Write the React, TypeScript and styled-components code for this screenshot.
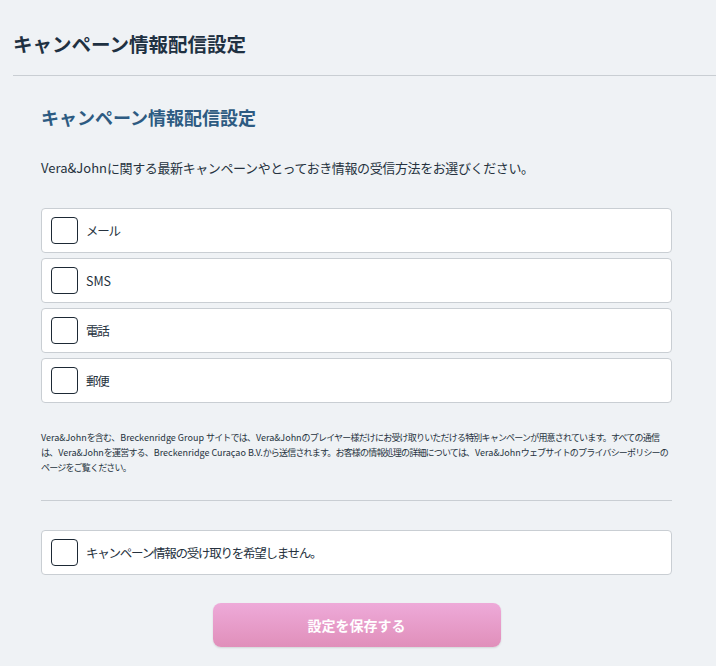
import React, { useState } from 'react';
import styled, { createGlobalStyle } from 'styled-components';

const GlobalStyle = createGlobalStyle`
  html, body {
    margin: 0;
    padding: 0;
    background: #eff2f5;
  }
  body {
    font-family: "Noto Sans CJK JP", "Noto Sans", sans-serif;
    color: #26323e;
  }
`;

const Page = styled.div`
  padding: 28px 0 20px 13px;
`;

const PageTitle = styled.h1`
  margin: 0;
  font-size: 19.5px;
  line-height: 32px;
  font-weight: 700;
  color: #1f3142;
`;

const Divider = styled.hr<{ $inset?: boolean }>`
  border: none;
  border-top: 1px solid #c9ced3;
  margin: ${({ $inset }) => ($inset ? '25px 44px 0 28px' : '15px 0 0 0')};
`;

const Section = styled.section`
  padding: 0 44px 0 28px;
`;

const SectionTitle = styled.h2`
  margin: 26px 0 0 0;
  font-size: 18px;
  line-height: 30px;
  font-weight: 700;
  color: #2d5b82;
`;

// body copy in the original uses a narrower Japanese face; tighten CJK runs only,
// giving the trailing spacing back so the run doesn't run into the next word
const Cjk = styled.span<{ $squeeze: number }>`
  letter-spacing: ${({ $squeeze }) => -$squeeze}em;
  padding-right: ${({ $squeeze }) => $squeeze}em;
`;

const Lead = styled.p`
  margin: 25px 0 0 0;
  font-size: 13px;
  line-height: 22px;
  color: #26323e;
`;

const Options = styled.div`
  display: flex;
  flex-direction: column;
  gap: 5px;
  margin-top: 29px;
`;

const OptionRow = styled.label`
  display: flex;
  align-items: center;
  gap: 8px;
  height: 45px;
  box-sizing: border-box;
  padding: 0 9px;
  background: #fff;
  border: 1px solid #c9ced3;
  border-radius: 4px;
  font-size: 12.5px;
  color: #26323e;
  cursor: pointer;
`;

const Box = styled.span<{ $checked: boolean }>`
  width: 27px;
  height: 27px;
  box-sizing: border-box;
  border: 1.5px solid #1d2935;
  border-radius: 4px;
  background: #fff;
  display: flex;
  align-items: center;
  justify-content: center;
  flex-shrink: 0;
  font-size: 16px;
  color: #1d2935;
`;

const FinePrint = styled.p`
  margin: 27px 0 0 0;
  font-size: 9px;
  line-height: 15px;
  color: #26323e;
`;

const OptOutWrap = styled.div`
  padding: 29px 44px 0 28px;
`;

const Actions = styled.div`
  display: flex;
  justify-content: center;
  padding: 28px 44px 0 28px;
`;

const SaveButton = styled.button`
  width: 288px;
  height: 44px;
  border: none;
  border-radius: 8px;
  background: linear-gradient(#eeaad9, #e08fba);
  box-shadow: 0 1px 2px rgba(0, 0, 0, 0.12);
  color: #fff;
  font-family: inherit;
  font-size: 14px;
  font-weight: 700;
  cursor: pointer;
`;

const CJK_RE = /([\u3000-\u30ff\u4e00-\u9fff\uff00-\uffef]+)/;

const jp = (text: string, squeeze: number) =>
  text.split(CJK_RE).map((part, i) =>
    CJK_RE.test(part) ? (
      <Cjk key={i} $squeeze={squeeze}>
        {part}
      </Cjk>
    ) : (
      part
    )
  );

const channels = ['メール', 'SMS', '電話', '郵便'];

const Option = ({ label }: { label: string }) => {
  const [checked, setChecked] = useState(false);
  return (
    <OptionRow onClick={() => setChecked(!checked)}>
      <Box $checked={checked}>{checked ? '✓' : ''}</Box>
      <span>{jp(label, 0.1)}</span>
    </OptionRow>
  );
};

const finePrint =
  'Vera&Johnを含む、Breckenridge Group サイトでは、Vera&Johnのプレイヤー様だけにお受け取りいただける特別キャンペーンが用意されています。すべての通信は、Vera&Johnを運営する、Breckenridge Curaçao B.V.から送信されます。お客様の情報処理の詳細については、Vera&Johnウェブサイトのプライバシーポリシーのページをご覧ください。';

export default function App() {
  return (
    <>
      <GlobalStyle />
      <Page>
        <PageTitle>キャンペーン情報配信設定</PageTitle>
        <Divider />
        <Section>
          <SectionTitle>キャンペーン情報配信設定</SectionTitle>
          <Lead>
            {jp('Vera&Johnに関する最新キャンペーンやとっておき情報の受信方法をお選びください。', 0.03)}
          </Lead>
          <Options>
            {channels.map((c) => (
              <Option key={c} label={c} />
            ))}
          </Options>
          <FinePrint>{jp(finePrint, 0.09)}</FinePrint>
        </Section>
        <Divider $inset />
        <OptOutWrap>
          <Option label="キャンペーン情報の受け取りを希望しません。" />
        </OptOutWrap>
        <Actions>
          <SaveButton>設定を保存する</SaveButton>
        </Actions>
      </Page>
    </>
  );
}
